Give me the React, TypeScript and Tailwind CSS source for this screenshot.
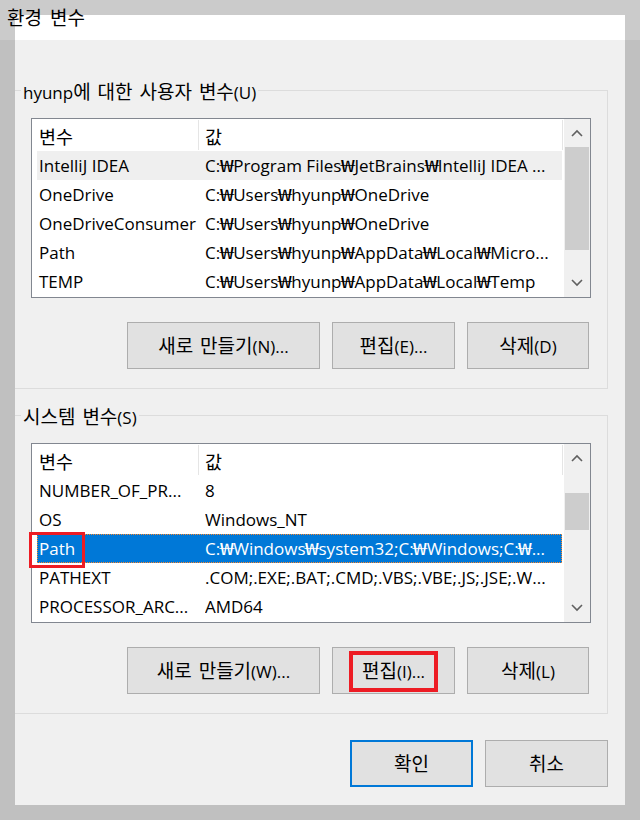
import React from "react";

type Row = { name: string; value: string };

const userRows: Row[] = [
  { name: "IntelliJ IDEA", value: "C:₩Program Files₩JetBrains₩IntelliJ IDEA ..." },
  { name: "OneDrive", value: "C:₩Users₩hyunp₩OneDrive" },
  { name: "OneDriveConsumer", value: "C:₩Users₩hyunp₩OneDrive" },
  { name: "Path", value: "C:₩Users₩hyunp₩AppData₩Local₩Micro..." },
  { name: "TEMP", value: "C:₩Users₩hyunp₩AppData₩Local₩Temp" },
];

const sysRows: Row[] = [
  { name: "NUMBER_OF_PR...", value: "8" },
  { name: "OS", value: "Windows_NT" },
  { name: "Path", value: "C:₩Windows₩system32;C:₩Windows;C:₩..." },
  { name: "PATHEXT", value: ".COM;.EXE;.BAT;.CMD;.VBS;.VBE;.JS;.JSE;.W..." },
  { name: "PROCESSOR_ARC...", value: "AMD64" },
];

// Hangul runs render a bit larger than the Latin text, as in the Windows UI font
function K({ t }: { t: string }) {
  const parts = t.split(/([\uAC00-\uD7A3]+(?:\s+[\uAC00-\uD7A3]+)*)/);
  return (
    <>
      {parts.map((p, i) =>
        /[\uAC00-\uD7A3]/.test(p) ? (
          <span key={i} className="text-[19px] [word-spacing:2px]">
            {p}
          </span>
        ) : (
          <span key={i}>{p}</span>
        )
      )}
    </>
  );
}

// The won sign used as path separator is wider in the original font
function W({ t }: { t: string }) {
  const parts = t.split("₩");
  return (
    <>
      {parts.map((p, i) => (
        <React.Fragment key={i}>
          {i > 0 && (
            <span className="inline-block w-[13px] text-center">
              <span className="inline-block scale-x-150">₩</span>
            </span>
          )}
          {p}
        </React.Fragment>
      ))}
    </>
  );
}

function Chevron({ up }: { up: boolean }) {
  return (
    <svg width="12" height="8" viewBox="0 0 12 8">
      <polyline
        points={up ? "1,7 6,2 11,7" : "1,1 6,6 11,1"}
        fill="none"
        stroke="#606060"
        strokeWidth="1.6"
      />
    </svg>
  );
}

function Scrollbar({ small }: { small: boolean }) {
  return (
    <div className="w-[26px] h-full bg-[#f0f0f0] flex flex-col">
      <div className="h-[28px] flex items-center justify-center">
        <Chevron up />
      </div>
      <div className="flex-1 flex flex-col px-[1px]">
        {small ? (
          <div className="mt-[21px] h-[37px] bg-[#cdcdcd]" />
        ) : (
          <div className="h-[103px] bg-[#cdcdcd]" />
        )}
      </div>
      <div className="h-[28px] flex items-center justify-center">
        <Chevron up={false} />
      </div>
    </div>
  );
}

function List({
  rows,
  hover,
  selected,
  small,
  redBox,
}: {
  rows: Row[];
  hover?: number;
  selected?: number;
  small: boolean;
  redBox?: boolean;
}) {
  return (
    <div className="relative w-[560px] h-[180px] border border-[#828790] bg-white flex">
      <div className="w-[532px] h-full flex flex-col">
        <div className="h-[32px] flex items-stretch text-[18.5px]">
          <div className="w-[166px] pl-[7px] pt-[3px] flex items-center">변수</div>
          <div className="w-[1px] my-[1px] bg-[#e5e5e5]" />
          <div className="w-[363px] pl-[6px] pt-[3px] flex items-center">값</div>
          <div className="w-[1px] my-[1px] bg-[#e5e5e5]" />
        </div>
        {rows.map((r, i) => {
          const isSel = i === selected;
          const isHover = i === hover;
          return (
            <div
              key={i}
              className={
                "h-[29px] ml-[5px] w-[525px] flex items-center pt-[1px] text-[17px] whitespace-nowrap overflow-hidden " +
                (isSel
                  ? "bg-[#0078d7] text-white border border-dotted border-[#ff8728]"
                  : isHover
                  ? "bg-[#efefef] text-black"
                  : "text-black")
              }
            >
              <div className={"w-[168px] overflow-hidden " + (isSel ? "pl-[1px]" : "pl-[2px]")}>{r.name}</div>
              <div className={"flex-1 overflow-hidden " + (isSel ? "-ml-[1px]" : "")}>
                <W t={r.value} />
              </div>
            </div>
          );
        })}
      </div>
      <Scrollbar small={small} />
      {redBox && (
        <div className="absolute left-[-3px] top-[88px] w-[56px] h-[36px] border-[3px] border-[#ed1c24]" />
      )}
    </div>
  );
}

function Btn({
  label,
  w,
  red,
  primary,
}: {
  label: string;
  w: string;
  red?: boolean;
  primary?: boolean;
}) {
  return (
    <div
      className={
        "relative h-[47px] bg-[#e1e1e1] flex items-center justify-center pt-[2px] text-[17px] text-black " +
        w +
        (primary ? " border-2 border-[#0078d7]" : " border border-[#adadad]")
      }
    >
      <span>
        <K t={label} />
      </span>
      {red && (
        <div className="absolute left-[16px] right-[16px] top-[3px] bottom-[1px] border-[4px] border-[#ed1c24]" />
      )}
    </div>
  );
}

function Group({
  label,
  children,
}: {
  label: string;
  children: React.ReactNode;
}) {
  return (
    <div className="relative w-[593px] border-t border-r border-b border-[#dcdcdc] pl-[16px] pt-[27px] pb-[19px]">
      <div className="absolute left-[6px] top-[-11px] bg-[#f0f0f0] px-[2px] text-[17px] leading-[24px] text-black">
        <K t={label} />
      </div>
      {children}
    </div>
  );
}

export default function App() {
  return (
    <div className="relative w-[640px] h-[820px] bg-[#c0c0c0] font-['Open_Sans','Noto_Sans_CJK_KR',sans-serif] overflow-hidden">
      <div className="h-[15px] bg-[#cbcbcb]" />
      <div className="flex h-[25px]">
        <div className="w-[15px] bg-[#cbcbcb]" />
        <div className="w-[610px] bg-white" />
        <div className="w-[15px] bg-[#cbcbcb]" />
      </div>
      <div className="flex">
        <div className="w-[15px]" />
        <div className="w-[610px] h-[765px] bg-[#f0f0f0] flex flex-col pt-[50px]">
          <Group label="hyunp에 대한 사용자 변수(U)">
            <List rows={userRows} hover={0} small={false} />
            <div className="mt-[24px] flex gap-[12px] pl-[96px]">
              <Btn w="w-[193px]" label="새로 만들기(N)..." />
              <Btn w="w-[123px]" label="편집(E)..." />
              <Btn w="w-[122px]" label="삭제(D)" />
            </div>
          </Group>
          <div className="mt-[26px]">
            <Group label="시스템 변수(S)">
              <List rows={sysRows} selected={2} small redBox />
              <div className="mt-[24px] flex gap-[12px] pl-[96px]">
                <Btn w="w-[193px]" label="새로 만들기(W)..." />
                <Btn w="w-[123px]" label="편집(I)..." red />
                <Btn w="w-[122px]" label="삭제(L)" />
              </div>
            </Group>
          </div>
          <div className="mt-[26px] flex gap-[12px] pl-[335px]">
            <Btn w="w-[123px]" label="확인" primary />
            <Btn w="w-[123px]" label="취소" />
          </div>
        </div>
        <div className="w-[15px]" />
      </div>
      <div className="absolute left-[7px] top-[5px] text-[19px] leading-[26px] [word-spacing:3px] text-black">
        환경 변수
      </div>
    </div>
  );
}
